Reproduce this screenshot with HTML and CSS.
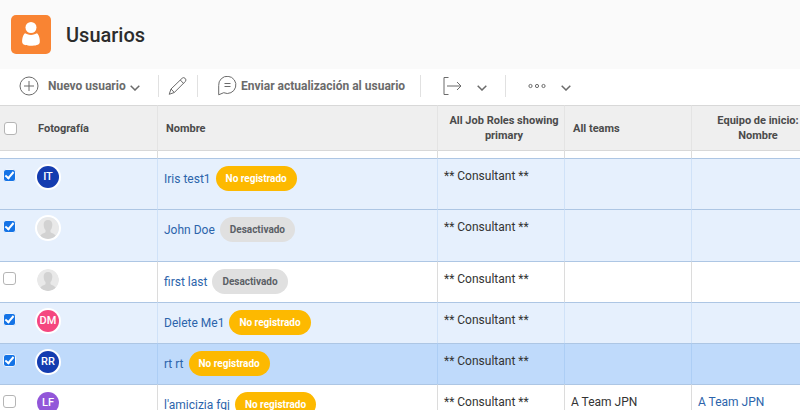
FILE: index.html
```html
<!DOCTYPE html>
<html lang="es">
<head>
<meta charset="utf-8">
<meta name="viewport" content="width=device-width, initial-scale=1">
<title>Usuarios</title>
<link rel="stylesheet" href="styles.css">
</head>
<body>
<header class="page-header">
  <svg class="app-icon" viewBox="0 0 40 40" aria-hidden="true">
    <rect width="40" height="39" rx="5" fill="#f98433"/>
    <circle cx="20" cy="12.500" r="5.500" fill="#fff"/>
    <path d="M14 18.200c1.500.6 3.300 1.800 6 1.800s4.500-1.200 6-1.800c2.200 1.800 3.200 6.500 2.700 9.500-.5 2.300-4.500 3-8.700 3s-8.200-.7-8.700-3c-.5-3 .5-7.700 2.700-9.500z" fill="#fff"/>
  </svg>
  <h1>Usuarios</h1>
</header>

<div class="toolbar" role="toolbar" aria-label="Acciones">
  <div class="group group-new">
    <button type="button" class="tool">
      <svg class="icon-plus" viewBox="0 0 20 20" aria-hidden="true"><circle cx="10" cy="10" r="9"/><path d="M10 5v10M5 10h10"/></svg>
      <span>Nuevo usuario</span>
      <svg class="chevron" viewBox="0 0 10 6" aria-hidden="true"><path d="M.7.700 5 5 9.300.7"/></svg>
    </button>
  </div>
  <div class="group group-edit">
    <button type="button" class="tool" aria-label="Editar">
      <svg class="icon-pencil" viewBox="0 0 20 20" aria-hidden="true"><path d="M1.200 18.300 3 13 14.200 2.200q1.500-1.300 3 .2 1.500 1.600.2 3L6.300 16.500zM3 13l3.300 3.500M12.300 4l3.300 3.500"/></svg>
    </button>
  </div>
  <div class="group group-send">
    <button type="button" class="tool">
      <svg class="icon-chat" viewBox="0 0 19 20" aria-hidden="true"><path d="M.7 18.800V9.500a8.600 8.600 0 1 1 5 7.200zM6.500 7.500h6M6.500 10.500h6"/></svg>
      <span>Enviar actualización al usuario</span>
    </button>
  </div>
  <div class="group group-export">
    <button type="button" class="tool" aria-label="Exportar">
      <svg class="icon-export" viewBox="0 0 20 18" aria-hidden="true"><path d="M5.500.5H1v17h4.500M4 9h14M14 5l4 4-4 4"/></svg>
      <svg class="chevron" viewBox="0 0 10 6" aria-hidden="true"><path d="M.7.700 5 5 9.300.7"/></svg>
    </button>
  </div>
  <div class="group group-more">
    <button type="button" class="tool" aria-label="Más acciones">
      <svg class="icon-more" viewBox="0 0 18 6" aria-hidden="true"><circle cx="2.500" cy="3" r="1.600"/><circle cx="9" cy="3" r="1.600"/><circle cx="15.500" cy="3" r="1.600"/></svg>
      <svg class="chevron" viewBox="0 0 10 6" aria-hidden="true"><path d="M.7.700 5 5 9.300.7"/></svg>
    </button>
  </div>
</div>

<svg class="symbols" aria-hidden="true">
  <symbol id="person" viewBox="0 0 22 22">
    <circle cx="11" cy="11" r="11" fill="#e9e9e9"/>
    <path d="M11 3c3.200 0 4.600 2.200 4.300 5.300-.2 2.400-.8 3.700-1.800 4.800v2.200c1.400 1 4 1.300 5.200 3.500a11 11 0 0 1-15.400 0c1.200-2.200 3.800-2.500 5.200-3.500v-2.200c-1-1.100-1.600-2.400-1.800-4.800C6.400 5.200 7.800 3 11 3z" fill="#d2d2d2"/>
  </symbol>
</svg>

<main class="grid">
<table>
  <colgroup><col class="col-photo"><col class="col-name"><col class="col-role"><col class="col-teams"><col></colgroup>
  <thead>
    <tr>
      <th scope="col"><div class="pick"><input type="checkbox" aria-label="Seleccionar todo"><span>Fotografía</span></div></th>
      <th scope="col">Nombre</th>
      <th scope="col" class="centered">All Job Roles showing primary</th>
      <th scope="col">All teams</th>
      <th scope="col" class="centered home">Equipo de inicio: Nombre</th>
    </tr>
  </thead>
  <tbody>
    <tr class="spacer"><td></td><td></td><td></td><td></td><td></td></tr>
    <tr class="tall selected">
      <td><div class="pick"><input type="checkbox" aria-label="Iris test1" checked><span class="avatar navy">IT</span></div></td>
      <td><div class="name"><a href="#">Iris test1</a><span class="badge pending">No registrado</span></div></td>
      <td>** Consultant **</td><td></td><td></td>
    </tr>
    <tr class="taller selected">
      <td><div class="pick"><input type="checkbox" aria-label="John Doe" checked><svg class="avatar"><use href="#person"/></svg></div></td>
      <td><div class="name"><a href="#">John Doe</a><span class="badge off">Desactivado</span></div></td>
      <td>** Consultant **</td><td></td><td></td>
    </tr>
    <tr>
      <td><div class="pick"><input type="checkbox" aria-label="first last"><svg class="avatar"><use href="#person"/></svg></div></td>
      <td><div class="name"><a href="#">first last</a><span class="badge off">Desactivado</span></div></td>
      <td>** Consultant **</td><td></td><td></td>
    </tr>
    <tr class="selected">
      <td><div class="pick"><input type="checkbox" aria-label="Delete Me1" checked><span class="avatar pink">DM</span></div></td>
      <td><div class="name"><a href="#">Delete Me1</a><span class="badge pending">No registrado</span></div></td>
      <td>** Consultant **</td><td></td><td></td>
    </tr>
    <tr class="selected active">
      <td><div class="pick"><input type="checkbox" aria-label="rt rt" checked><span class="avatar navy">RR</span></div></td>
      <td><div class="name"><a href="#">rt rt</a><span class="badge pending">No registrado</span></div></td>
      <td>** Consultant **</td><td></td><td></td>
    </tr>
    <tr>
      <td><div class="pick"><input type="checkbox" aria-label="l'amicizia fgj"><span class="avatar purple">LF</span></div></td>
      <td><div class="name"><a href="#">l'amicizia fgj</a><span class="badge pending">No registrado</span></div></td>
      <td>** Consultant **</td><td>A Team JPN</td><td><a href="#">A Team JPN</a></td>
    </tr>
  </tbody>
</table>
</main>
</body>
</html>
```
FILE: styles.css
```css
*, *::before { box-sizing: border-box; }

body {
  margin: 0;
  height: 100vh;
  overflow: hidden;
  background: #fff;
  color: #333;
  font: 12px/16px Roboto, "Open Sans", sans-serif;
}

a { color: #2c64ab; text-decoration: none; }

.symbols { display: none; }

.page-header {
  display: flex;
  align-items: center;
  gap: 15px;
  padding: 15px 11px 14px;
  background: #fafafa;
}

.app-icon { width: 40px; height: 40px; }

h1 {
  margin: 0;
  color: #2c2c2c;
  font-size: 20px;
  line-height: 30px;
  font-weight: 500;
}

.toolbar {
  display: flex;
  align-items: center;
  padding: 6px 0 8px;
}

.group {
  display: flex;
  align-items: center;
  height: 22px;
}

.group + .group { border-left: 1px solid #e1e1e1; }

.group-new { width: 158px; padding-left: 19px; }
.group-edit { width: 39px; padding-left: 9px; }
.group-send { width: 223px; padding-left: 20px; }
.group-export { width: 85px; padding-left: 22px; }
.group-more { padding-left: 22px; }

.tool {
  display: flex;
  align-items: center;
  padding: 0;
  border: 0;
  background: none;
  color: #6b6b6b;
  font: inherit;
  font-weight: 700;
  white-space: nowrap;
}

.tool svg {
  flex: none;
  fill: none;
  stroke: #6b6b6b;
  stroke-width: 1;
}

.tool .chevron {
  width: 10px;
  height: 6px;
  margin-top: 4px;
  stroke-width: 1.5;
}

.icon-plus { width: 20px; height: 20px; margin-right: 9px; }
.icon-plus ~ .chevron { margin-left: 4px; }
.icon-pencil { width: 20px; height: 20px; }
.icon-chat { width: 19px; height: 20px; margin-right: 4px; }
.icon-export { width: 20px; height: 18px; margin-right: 14px; }
.icon-more { width: 18px; height: 6px; margin-right: 15px; }

.grid { overflow: hidden; }

table {
  width: 100%;
  border-collapse: separate;
  border-spacing: 0;
  table-layout: fixed;
}

.col-photo { width: 157px; }
.col-name { width: 280px; }
.col-role, .col-teams { width: 127px; }

th {
  height: 46px;
  padding: 0 2px 0 8px;
  border-top: 1px solid #d8d8d8;
  border-bottom: 1px solid #d8d8d8;
  background: #efefef;
  color: #4b4b4b;
  font-size: 11px;
  line-height: 15px;
  font-weight: 700;
  text-align: left;
}

th + th { border-left: 1px solid #e4e4e4; }
th:first-child { padding: 0 0 0 4px; }
td:first-child { padding: 0 0 0 3px; }
.centered { text-align: center; }
th.home { padding: 0 0 0 24px; }

td {
  height: 41px;
  padding: 9px 6px 0;
  border-top: 1px solid #adc6e4;
  vertical-align: top;
}

td + td { border-left: 1px solid #dcdcdc; }
.spacer td { height: 7px; padding: 0; border-top: 0; }
.tall td { height: 51px; }
.taller td { height: 52px; }
.selected td { background: #e6f0fd; border-left-color: #d0e2f8; }
.active td { background: #bfdafb; border-left-color: #adcef5; }

.pick { display: flex; align-items: center; gap: 21px; }
td .pick { align-items: flex-start; padding-top: 7px; }

input {
  appearance: none;
  flex: none;
  width: 13px;
  height: 13px;
  margin: 0;
  border: 1px solid #b5b5b5;
  border-radius: 3px;
  background: #fff;
}

td input { margin-top: 3px; }

input:checked {
  display: grid;
  justify-items: center;
  align-items: start;
  border-color: #eef5fe;
  background: #1473e6;
}

input:checked::before {
  content: "";
  width: 5px;
  height: 9px;
  border: solid #fff;
  border-width: 0 2px 2px 0;
  transform: rotate(40deg);
}

.avatar {
  flex: none;
  width: 22px;
  height: 22px;
  border-radius: 50%;
  box-shadow: 0 0 0 2px #fff;
  color: #fff;
  font-size: 11px;
  line-height: 22px;
  font-weight: 500;
  text-align: center;
}

.navy { background: #143cb0; }
.pink { background: #f5477f; }
.purple { background: #9256d9; }

td:nth-child(2) { padding-top: 7px; }

.name { display: flex; align-items: center; gap: 5px; }

.badge {
  padding: 0 10px;
  border-radius: 13px;
  font-size: 10px;
  line-height: 25px;
  font-weight: 700;
}

.pending { background: #fdb900; color: #fff; }
.off { background: #e0e0e0; color: #5b5f66; }
```
